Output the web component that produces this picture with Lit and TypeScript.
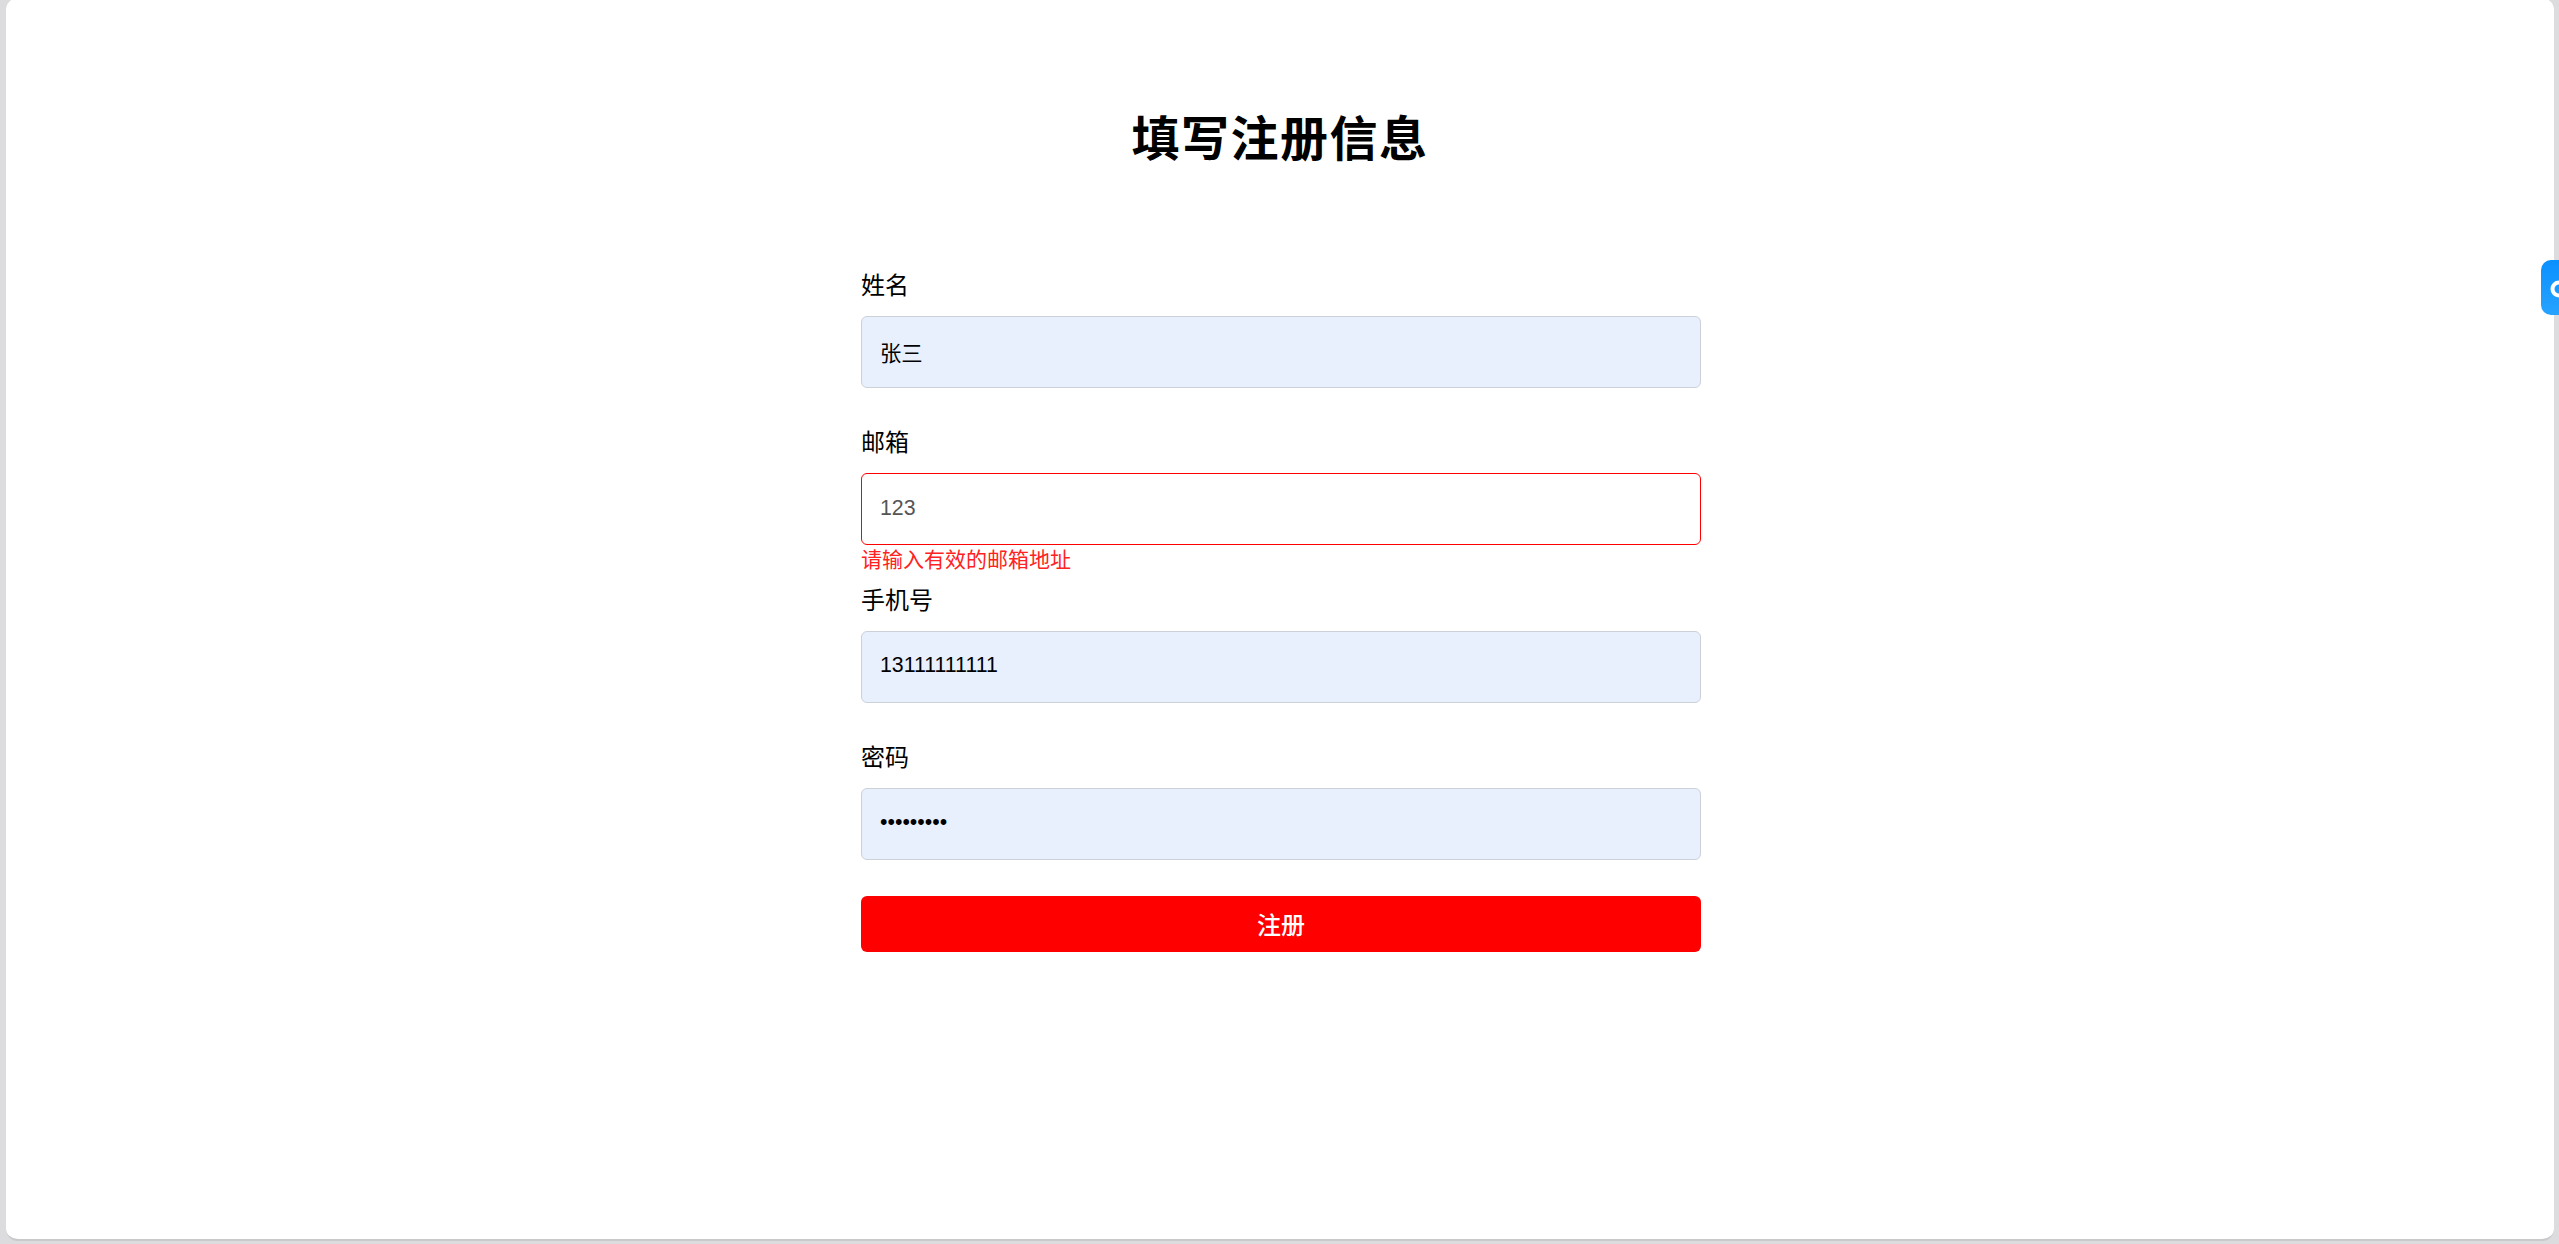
import { LitElement, html, css } from 'lit';
import { customElement, state } from 'lit/decorators.js';

interface Field {
  key: string;
  label: string;
  type: string;
  value: string;
  error?: string;
}

@customElement('app-root')
export class AppRoot extends LitElement {
  static styles = css`
    :host {
      display: block;
      height: 1244px;
      overflow: hidden;
      background: #dcdcdf;
      font-family: 'Liberation Sans', 'Noto Sans CJK SC', sans-serif;
      color: #000;
    }
    .window {
      position: relative;
      box-sizing: border-box;
      height: 1243px;
      margin: -2px 5px 0 6px;
      padding-top: 110px;
      background: #fff;
      border-radius: 12px;
      border-bottom: 2px solid #c9c9cc;
    }
    h1 {
      margin: 0 0 96px;
      font-size: 48px;
      line-height: 64px;
      font-weight: 700;
      text-align: center;
      letter-spacing: 1.5px;
    }
    form {
      width: 840px;
      margin: 0 auto;
      transform: translateX(1px);
    }
    .group {
      position: relative;
      margin-bottom: 37.3px;
    }
    label {
      display: block;
      height: 36px;
      margin-bottom: 12px;
      font-size: 24px;
      line-height: 36px;
    }
    input {
      display: block;
      box-sizing: border-box;
      width: 100%;
      height: 72px;
      padding: 0 18px 2px;
      border: 1.6px solid #ccd0d8;
      border-radius: 6px;
      background: #e8f0fe;
      font-family: inherit;
      font-size: 21.33px;
      color: #000;
      outline: none;
    }
    input.invalid {
      border-color: #f00;
      background: #fff;
      color: #555;
    }
    .error {
      position: absolute;
      top: 100%;
      left: 0;
      font-size: 21px;
      line-height: 30px;
      color: #f22;
    }
    button {
      display: block;
      width: 100%;
      height: 56px;
      margin-top: -1px;
      padding: 0 0 2px;
      border: none;
      border-radius: 6px;
      background: #f00;
      color: #fff;
      font-family: inherit;
      font-size: 24px;
      font-weight: 500;
    }
    .side-tab {
      position: absolute;
      top: 262px;
      right: -5px;
      width: 18px;
      height: 55px;
      overflow: hidden;
      border-radius: 10px 0 0 10px;
      background: linear-gradient(180deg, #0a90ff, #27a3ff);
    }
    .side-tab svg {
      display: block;
    }
  `;

  @state() private fields: Field[] = [
    { key: 'name', label: '姓名', type: 'text', value: '张三' },
    { key: 'email', label: '邮箱', type: 'text', value: '123', error: '请输入有效的邮箱地址' },
    { key: 'phone', label: '手机号', type: 'text', value: '13111111111' },
    { key: 'password', label: '密码', type: 'password', value: '123456789' },
  ];

  protected render() {
    return html`
      <div class="window">
        <h1>填写注册信息</h1>
        <form @submit=${(e: Event) => e.preventDefault()}>
          ${this.fields.map(
            (f) => html`
              <div class="group">
                <label for=${f.key}>${f.label}</label>
                <input
                  id=${f.key}
                  class=${f.error ? 'invalid' : ''}
                  type=${f.type}
                  .value=${f.value}
                />
                ${f.error ? html`<div class="error">${f.error}</div>` : ''}
              </div>
            `
          )}
          <button type="submit">注册</button>
        </form>
        <div class="side-tab">
          <svg width="18" height="55" viewBox="0 0 18 55">
            <circle cx="18" cy="29" r="6.5" fill="none" stroke="#fff" stroke-width="4" />
          </svg>
        </div>
      </div>
    `;
  }
}
